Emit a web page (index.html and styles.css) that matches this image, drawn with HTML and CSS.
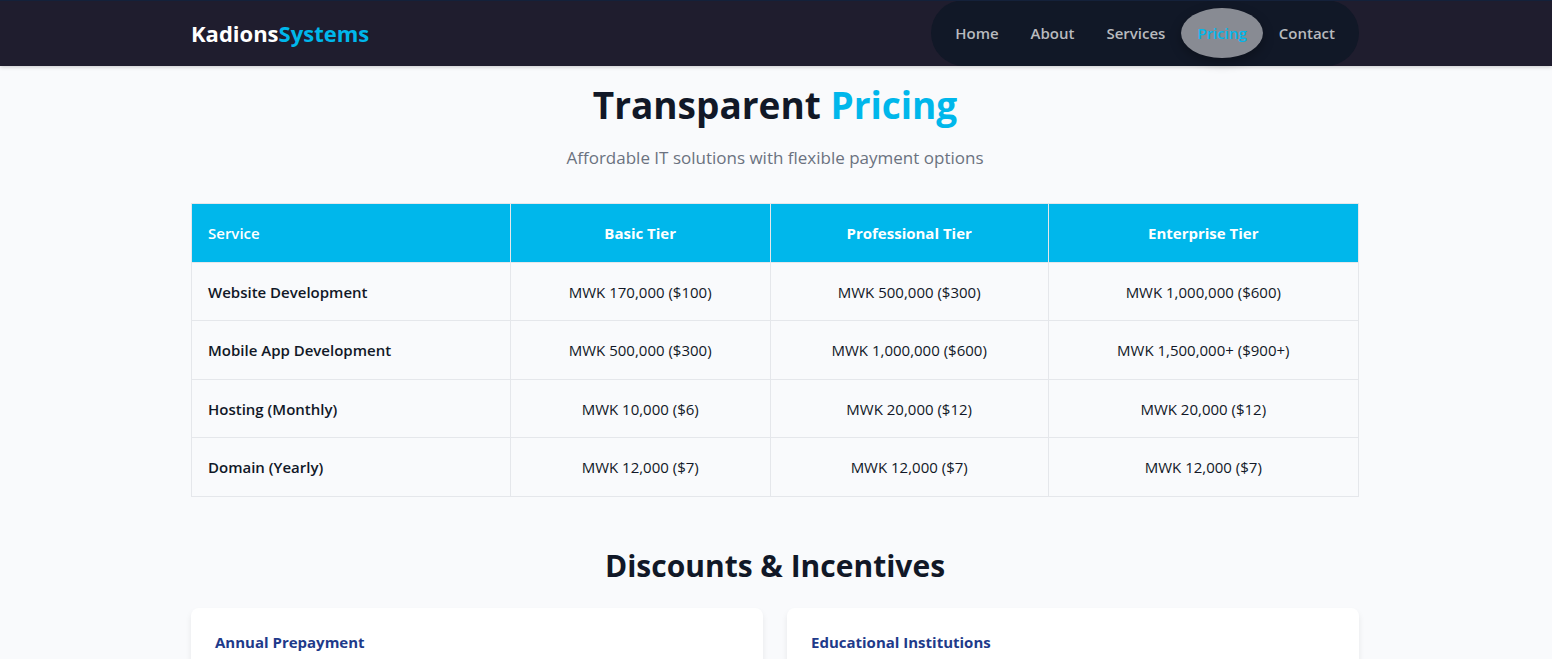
FILE: index.html
```html
<!DOCTYPE html>
<html lang="en">
<head>
<meta charset="utf-8">
<title>Kadions Systems - Pricing</title>
<link rel="stylesheet" href="styles.css">
</head>
<body>
<header class="site-header">
  <div class="container header-row">
    <a class="logo" href="#">Kadions<span class="accent">Systems</span></a>
    <nav class="nav">
      <a class="nav-link" href="#">Home</a>
      <a class="nav-link" href="#">About</a>
      <a class="nav-link" href="#">Services</a>
      <a class="nav-link active" href="#" aria-current="page">Pricing</a>
      <a class="nav-link" href="#">Contact</a>
    </nav>
  </div>
</header>
<main class="container">
  <div class="intro">
    <h1 class="title">Transparent <span class="accent">Pricing</span></h1>
    <p class="subtitle">Affordable IT solutions with flexible payment options</p>
  </div>
  <table class="pricing">
    <colgroup><col class="col-service"><col class="col-basic"><col class="col-pro"><col></colgroup>
    <thead>
      <tr><th class="service-head" scope="col">Service</th><th scope="col">Basic Tier</th><th scope="col">Professional Tier</th><th scope="col">Enterprise Tier</th></tr>
    </thead>
    <tbody>
      <tr><th scope="row">Website Development</th><td>MWK 170,000 ($100)</td><td>MWK 500,000 ($300)</td><td>MWK 1,000,000 ($600)</td></tr>
      <tr><th scope="row">Mobile App Development</th><td>MWK 500,000 ($300)</td><td>MWK 1,000,000 ($600)</td><td>MWK 1,500,000+ ($900+)</td></tr>
      <tr><th scope="row">Hosting (Monthly)</th><td>MWK 10,000 ($6)</td><td>MWK 20,000 ($12)</td><td>MWK 20,000 ($12)</td></tr>
      <tr><th scope="row">Domain (Yearly)</th><td>MWK 12,000 ($7)</td><td>MWK 12,000 ($7)</td><td>MWK 12,000 ($7)</td></tr>
    </tbody>
  </table>
  <h2 class="section-title">Discounts &amp; Incentives</h2>
  <div class="cards">
    <section class="card"><h3 class="card-title">Annual Prepayment</h3></section>
    <section class="card"><h3 class="card-title">Educational Institutions</h3></section>
  </div>
</main>
</body>
</html>
```

FILE: styles.css
```css
* { box-sizing: border-box; margin: 0; padding: 0; }
body {
  background: #f9fafc;
  color: #111827;
  font-family: "Open Sans", "Noto Sans", sans-serif;
  font-size: 15px;
  line-height: 1.7;
}
a { color: inherit; text-decoration: none; }
.container { max-width: 1200px; margin: 0 auto; padding: 0 17px 0 15px; }
.accent { color: #00b7eb; }
.site-header {
  position: relative;
  background: #1f1d2e;
  box-shadow: 0 1px 4px rgba(0, 0, 0, 0.2);
}
/* Thin navy line across the top edge of the header */
.site-header::before {
  content: "";
  position: absolute;
  top: 0;
  left: 0;
  right: 0;
  height: 1px;
  background: #14213a;
}
.header-row { display: flex; justify-content: space-between; align-items: center; }
.logo { padding-top: 2px; color: #fff; font-size: 22px; font-weight: 700; }
.nav { display: flex; padding: 8px; background: #111827; border-radius: 33px; }
.nav-link {
  padding: 12px 16px;
  color: #b8babe;
  font-weight: 600;
  line-height: 26px;
}
.active { background: #888b93; border-radius: 50%; color: #00b7eb; box-shadow: 0 4px 12px rgba(0, 0, 0, 0.3); }
.intro { padding: 14px 0 32px; text-align: center; }
.title { font-size: 37px; line-height: 50px; font-weight: 700; }
.subtitle { margin-top: 14px; font-size: 17px; line-height: 27px; color: #6b7280; }
.pricing { width: 100%; table-layout: fixed; border-collapse: collapse; }
.col-service { width: 27.3%; }
.col-basic { width: 22.3%; }
.col-pro { width: 23.8%; }
.pricing th, .pricing td { border: 1px solid #e5e7eb; padding: 17px 16px 15px; text-align: center; }
.pricing thead th { background: #00b7eb; color: #fff; font-weight: 700; }
.pricing thead .service-head { text-align: left; font-weight: 600; }
.pricing tbody th { text-align: left; font-weight: 600; }
.section-title { margin: 48px 0 21px; text-align: center; font-size: 30px; line-height: 42px; }
.cards { display: grid; grid-template-columns: 1fr 1fr; gap: 24px; }
.card { padding: 22px 24px 24px; background: #fff; border-radius: 8px; box-shadow: 0 4px 6px rgba(0, 0, 0, 0.08); }
.card-title { color: #1e3a8a; font-size: 15px; font-weight: 700; }
```
